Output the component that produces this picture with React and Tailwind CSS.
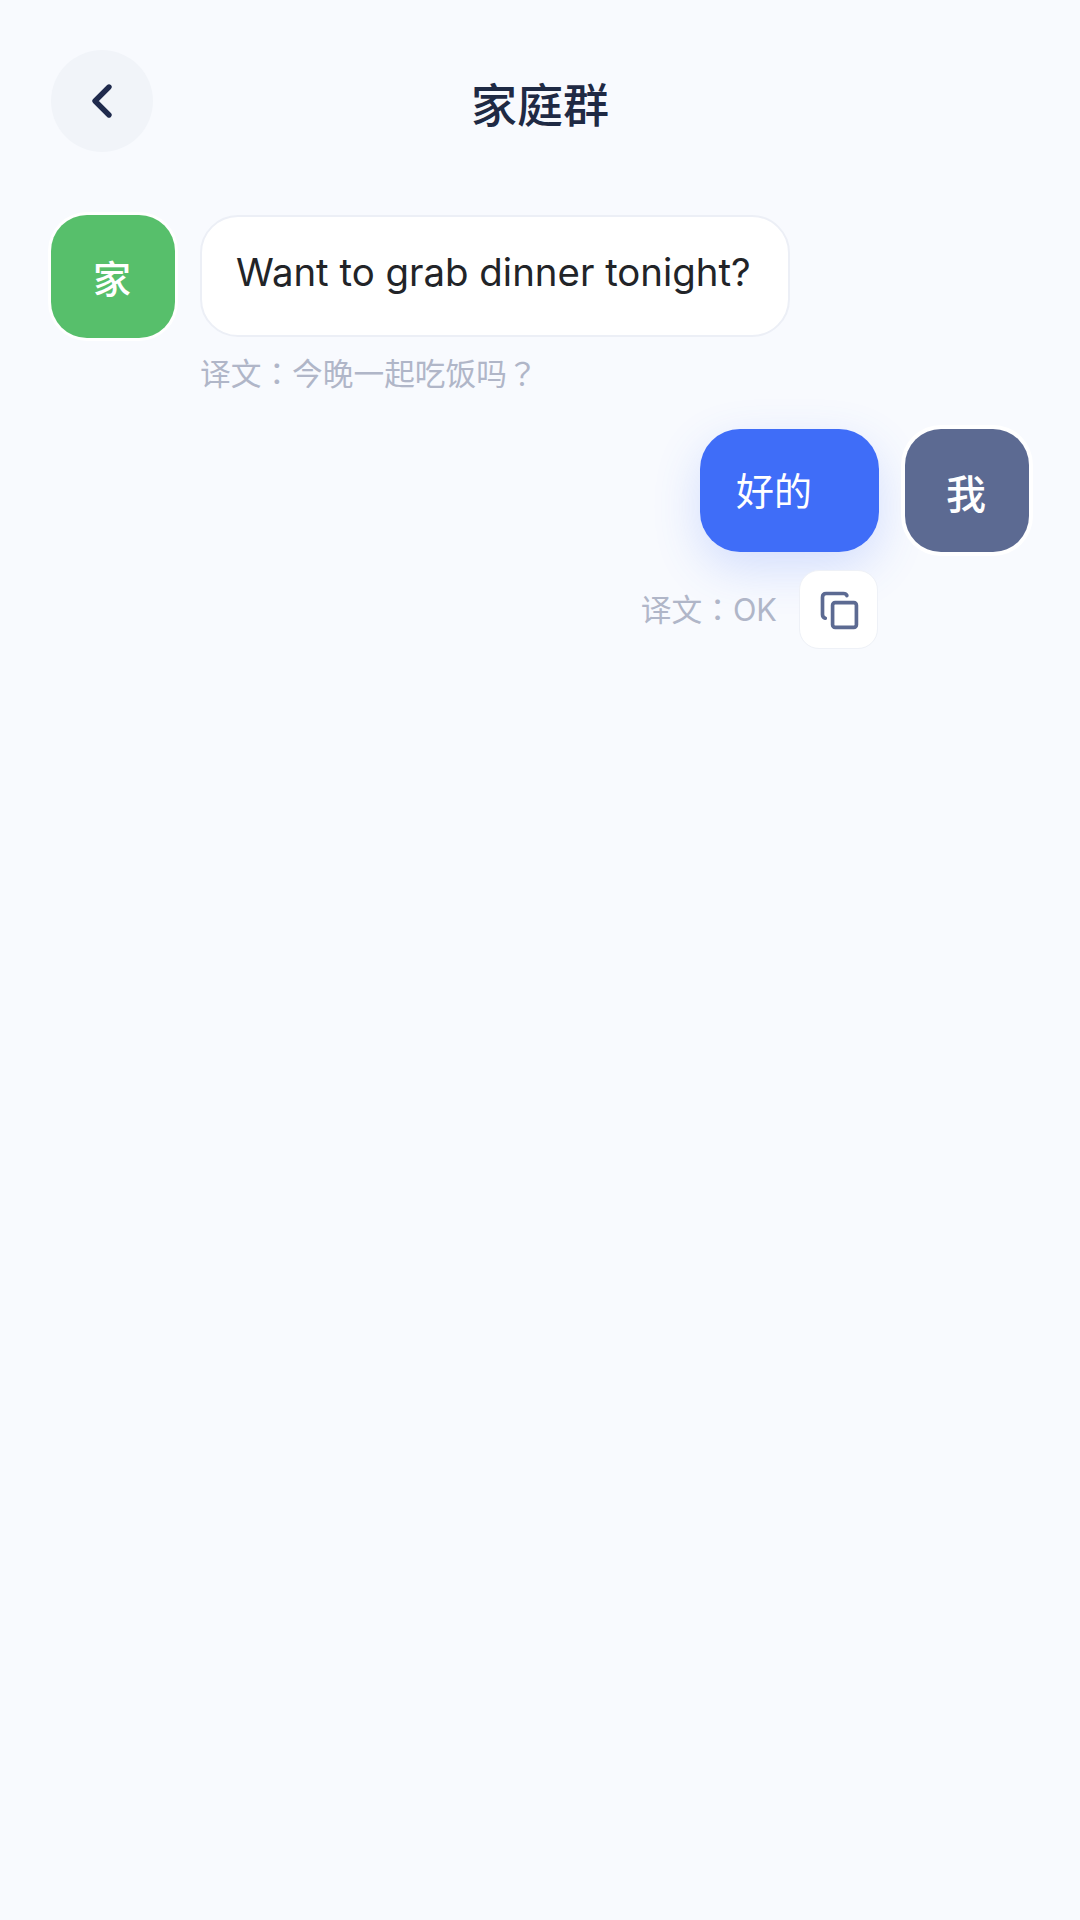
import { ChevronLeft } from "lucide-react";

const font = "font-['Inter','Noto_Sans_CJK_SC',sans-serif]";
const noteFont = "font-['Inter','Noto_Sans_CJK_TC',sans-serif]";

function CopyIcon() {
  return (
    <svg viewBox="0 0 24 24" fill="none" stroke="currentColor" strokeWidth="2" strokeLinecap="round" strokeLinejoin="round" className="h-[44px] w-[44px]">
      <rect x="8.5" y="8" width="13" height="13.5" rx="1.4" />
      <path d="M4.5 16.5C3.4 16.2 3 15.4 3 14.5V5c0-1.2.8-2 2-2h9.5c.9 0 1.5.4 1.8 1.1" />
    </svg>
  );
}

export default function App() {
  return (
    <div className={`min-h-[1920px] w-[1080px] bg-[#f8fafe] px-[51px] pt-[50px] ${font}`}>
      {/* Header */}
      <div className="relative flex h-[102px] items-center justify-center">
        <button className="absolute left-0 top-0 flex h-[102px] w-[102px] items-center justify-center rounded-full bg-[#f1f4f9] text-[#1f2a4d]">
          <ChevronLeft className="h-[56px] w-[56px]" strokeWidth={2.3} />
        </button>
        <h1 className="pt-[7px] text-[46px] font-medium leading-none text-[#1f2a44]">家庭群</h1>
      </div>

      {/* Incoming message */}
      <div className="mt-[63px] flex gap-[25px]">
        <div className="flex h-[123px] w-[124px] shrink-0 items-center justify-center rounded-[36px] bg-[#57bf6b] pt-[6px] pr-[2px] text-[38px] font-medium text-white shadow-[0_0_0_3px_#ffffff]">
          家
        </div>
        <div>
          <div className="flex h-[122px] items-center rounded-[38px] border-2 border-[#eceff6] bg-white pl-[34px] pr-[37px] pb-[7px] text-[38.4px] text-[#222428]">
            Want to grab dinner tonight?
          </div>
          <div className={`mt-[19px] text-[30.7px] leading-[36px] text-[#b0b6c8] ${noteFont}`}>译文：今晚一起吃饭吗？</div>
        </div>
      </div>

      {/* Outgoing message */}
      <div className="mt-[37px] flex justify-end gap-[26px]">
        <div className="flex flex-col items-end">
          <div className="flex h-[123px] w-[179px] items-center rounded-[40px] bg-[#3f6df8] pl-[36px] pt-[2px] text-[38px] text-white shadow-[0_16px_48px_rgba(63,109,248,0.2)]">
            好的
          </div>
          <div className="mt-[18px] flex items-center gap-[22px] pr-[1px]">
            <span className={`text-[30.7px] leading-[36px] text-[#b0b6c8] ${noteFont}`}>译文：OK</span>
            <button className="flex h-[79px] w-[79px] items-center justify-center rounded-[20px] border border-[#eef1f7] bg-white text-[#5c6a92]">
              <CopyIcon />
            </button>
          </div>
        </div>
        <div className="flex h-[123px] w-[124px] shrink-0 items-center justify-center rounded-[36px] bg-[#5c6a92] pt-[8px] pr-[2px] text-[40px] font-medium text-white shadow-[0_0_0_4px_#ffffff]">
          我
        </div>
      </div>
    </div>
  );
}
